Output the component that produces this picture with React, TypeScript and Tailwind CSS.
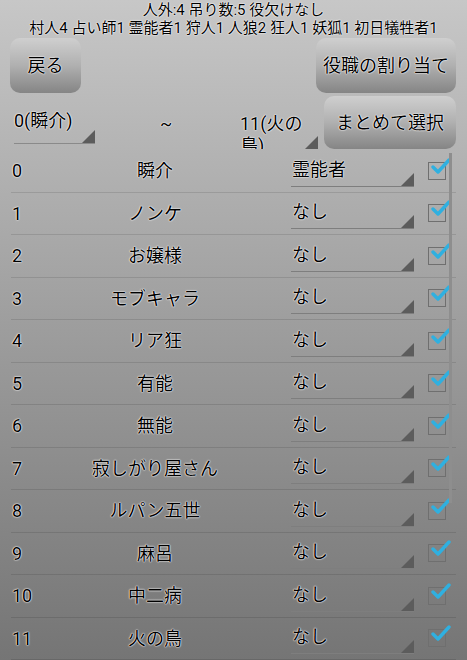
import React from 'react';

const halo = '[text-shadow:0_0_2px_#fff,0_0_1px_#fff,0_0_1px_#fff]';

const players = [
  { no: 0, name: '瞬介', role: '霊能者' },
  { no: 1, name: 'ノンケ', role: 'なし' },
  { no: 2, name: 'お嬢様', role: 'なし' },
  { no: 3, name: 'モブキャラ', role: 'なし' },
  { no: 4, name: 'リア狂', role: 'なし' },
  { no: 5, name: '有能', role: 'なし' },
  { no: 6, name: '無能', role: 'なし' },
  { no: 7, name: '寂しがり屋さん', role: 'なし' },
  { no: 8, name: 'ルパン五世', role: 'なし' },
  { no: 9, name: '麻呂', role: 'なし' },
  { no: 10, name: '中二病', role: 'なし' },
  { no: 11, name: '火の鳥', role: 'なし' },
];

function Corner() {
  return (
    <svg className="absolute right-0 bottom-0" width="13" height="13" viewBox="0 0 13 13">
      <polygon points="13,0 13,13 0,13" fill="#5c5c5c" />
    </svg>
  );
}

function Check() {
  return (
    <div className="relative w-[18px] h-[18px] border-[1.5px] border-[#6f6f6f]">
      <svg className="absolute -top-[7px] left-[2px]" width="20" height="20" viewBox="0 0 20 20">
        <path d="M2 11 L7 16 L18 4" fill="none" stroke="#2fb0e0" strokeWidth="3.4" strokeLinecap="round" strokeLinejoin="round" />
      </svg>
    </div>
  );
}

function GrayButton({ label, className }: { label: string; className?: string }) {
  return (
    <div
      className={`flex items-center justify-center rounded-[10px] bg-linear-to-b from-[#cfcfcf] via-[#b0b0b0] to-[#858585] text-[18px] text-black ${halo} ${className ?? ''}`}
    >
      {label}
    </div>
  );
}

export default function App() {
  return (
    <div
      className="relative w-[467px] h-[660px] overflow-hidden bg-linear-to-b from-[#c7c7c7] to-[#757575] text-black"
      style={{ fontFamily: 'Roboto, "Noto Sans CJK JP", sans-serif' }}
    >
      <div className={`pt-[1px] text-center text-[15px] leading-[18px] ${halo}`}>
        <div>人外:4 吊り数:5 役欠けなし</div>
        <div>村人4 占い師1 霊能者1 狩人1 人狼2 狂人1 妖狐1 初日犠牲者1</div>
      </div>

      <div className="flex justify-between pl-[10px] pr-[11px] mt-[1px]">
        <GrayButton label="戻る" className="w-[71px] h-[55px]" />
        <GrayButton label="役職の割り当て" className="w-[140px] h-[55px]" />
      </div>

      <div className="flex items-end h-[56px]">
        <div className="relative ml-[14px] w-[81px] h-[47px] border-b border-[#8a8a8a] mb-[5px]">
          <div className={`pt-[13px] text-[18px] leading-[22px] ${halo}`}>0(瞬介)</div>
          <Corner />
        </div>
        <div className={`ml-[65px] w-[16px] text-[18px] leading-[22px] mb-[14px] ${halo}`}>~</div>
        <div className="relative ml-[64px] w-[78px] h-[48px] overflow-hidden">
          <div className={`pt-[12px] text-[18px] leading-[22px] ${halo}`}>11(火の鳥)</div>
          <Corner />
        </div>
        <GrayButton label="まとめて選択" className="ml-[6px] w-[132px] h-[53px]" />
      </div>

      <div className="mt-[1px]">
        {players.map((p) => (
          <div key={p.no} className="mx-[11px] flex items-center h-[42.5px] border-b border-[#0000001c] text-[18px]">
            <div className={`w-[39px] pl-[1px] ${halo}`}>{p.no}</div>
            <div className={`w-[210px] text-center ${halo}`}>{p.name}</div>
            <div className="relative ml-[31px] w-[123px] h-[30px] mt-[2px] border-b border-[#7e7e7e]">
              <div className={`pl-[1px] leading-[26px] ${halo}`}>{p.role}</div>
              <Corner />
            </div>
            <div className="ml-[14px]">
              <Check />
            </div>
          </div>
        ))}
      </div>

      <div className="absolute left-[449px] top-[153px] w-[3px] h-[350px] bg-[#8e8e8e]" />
    </div>
  );
}
